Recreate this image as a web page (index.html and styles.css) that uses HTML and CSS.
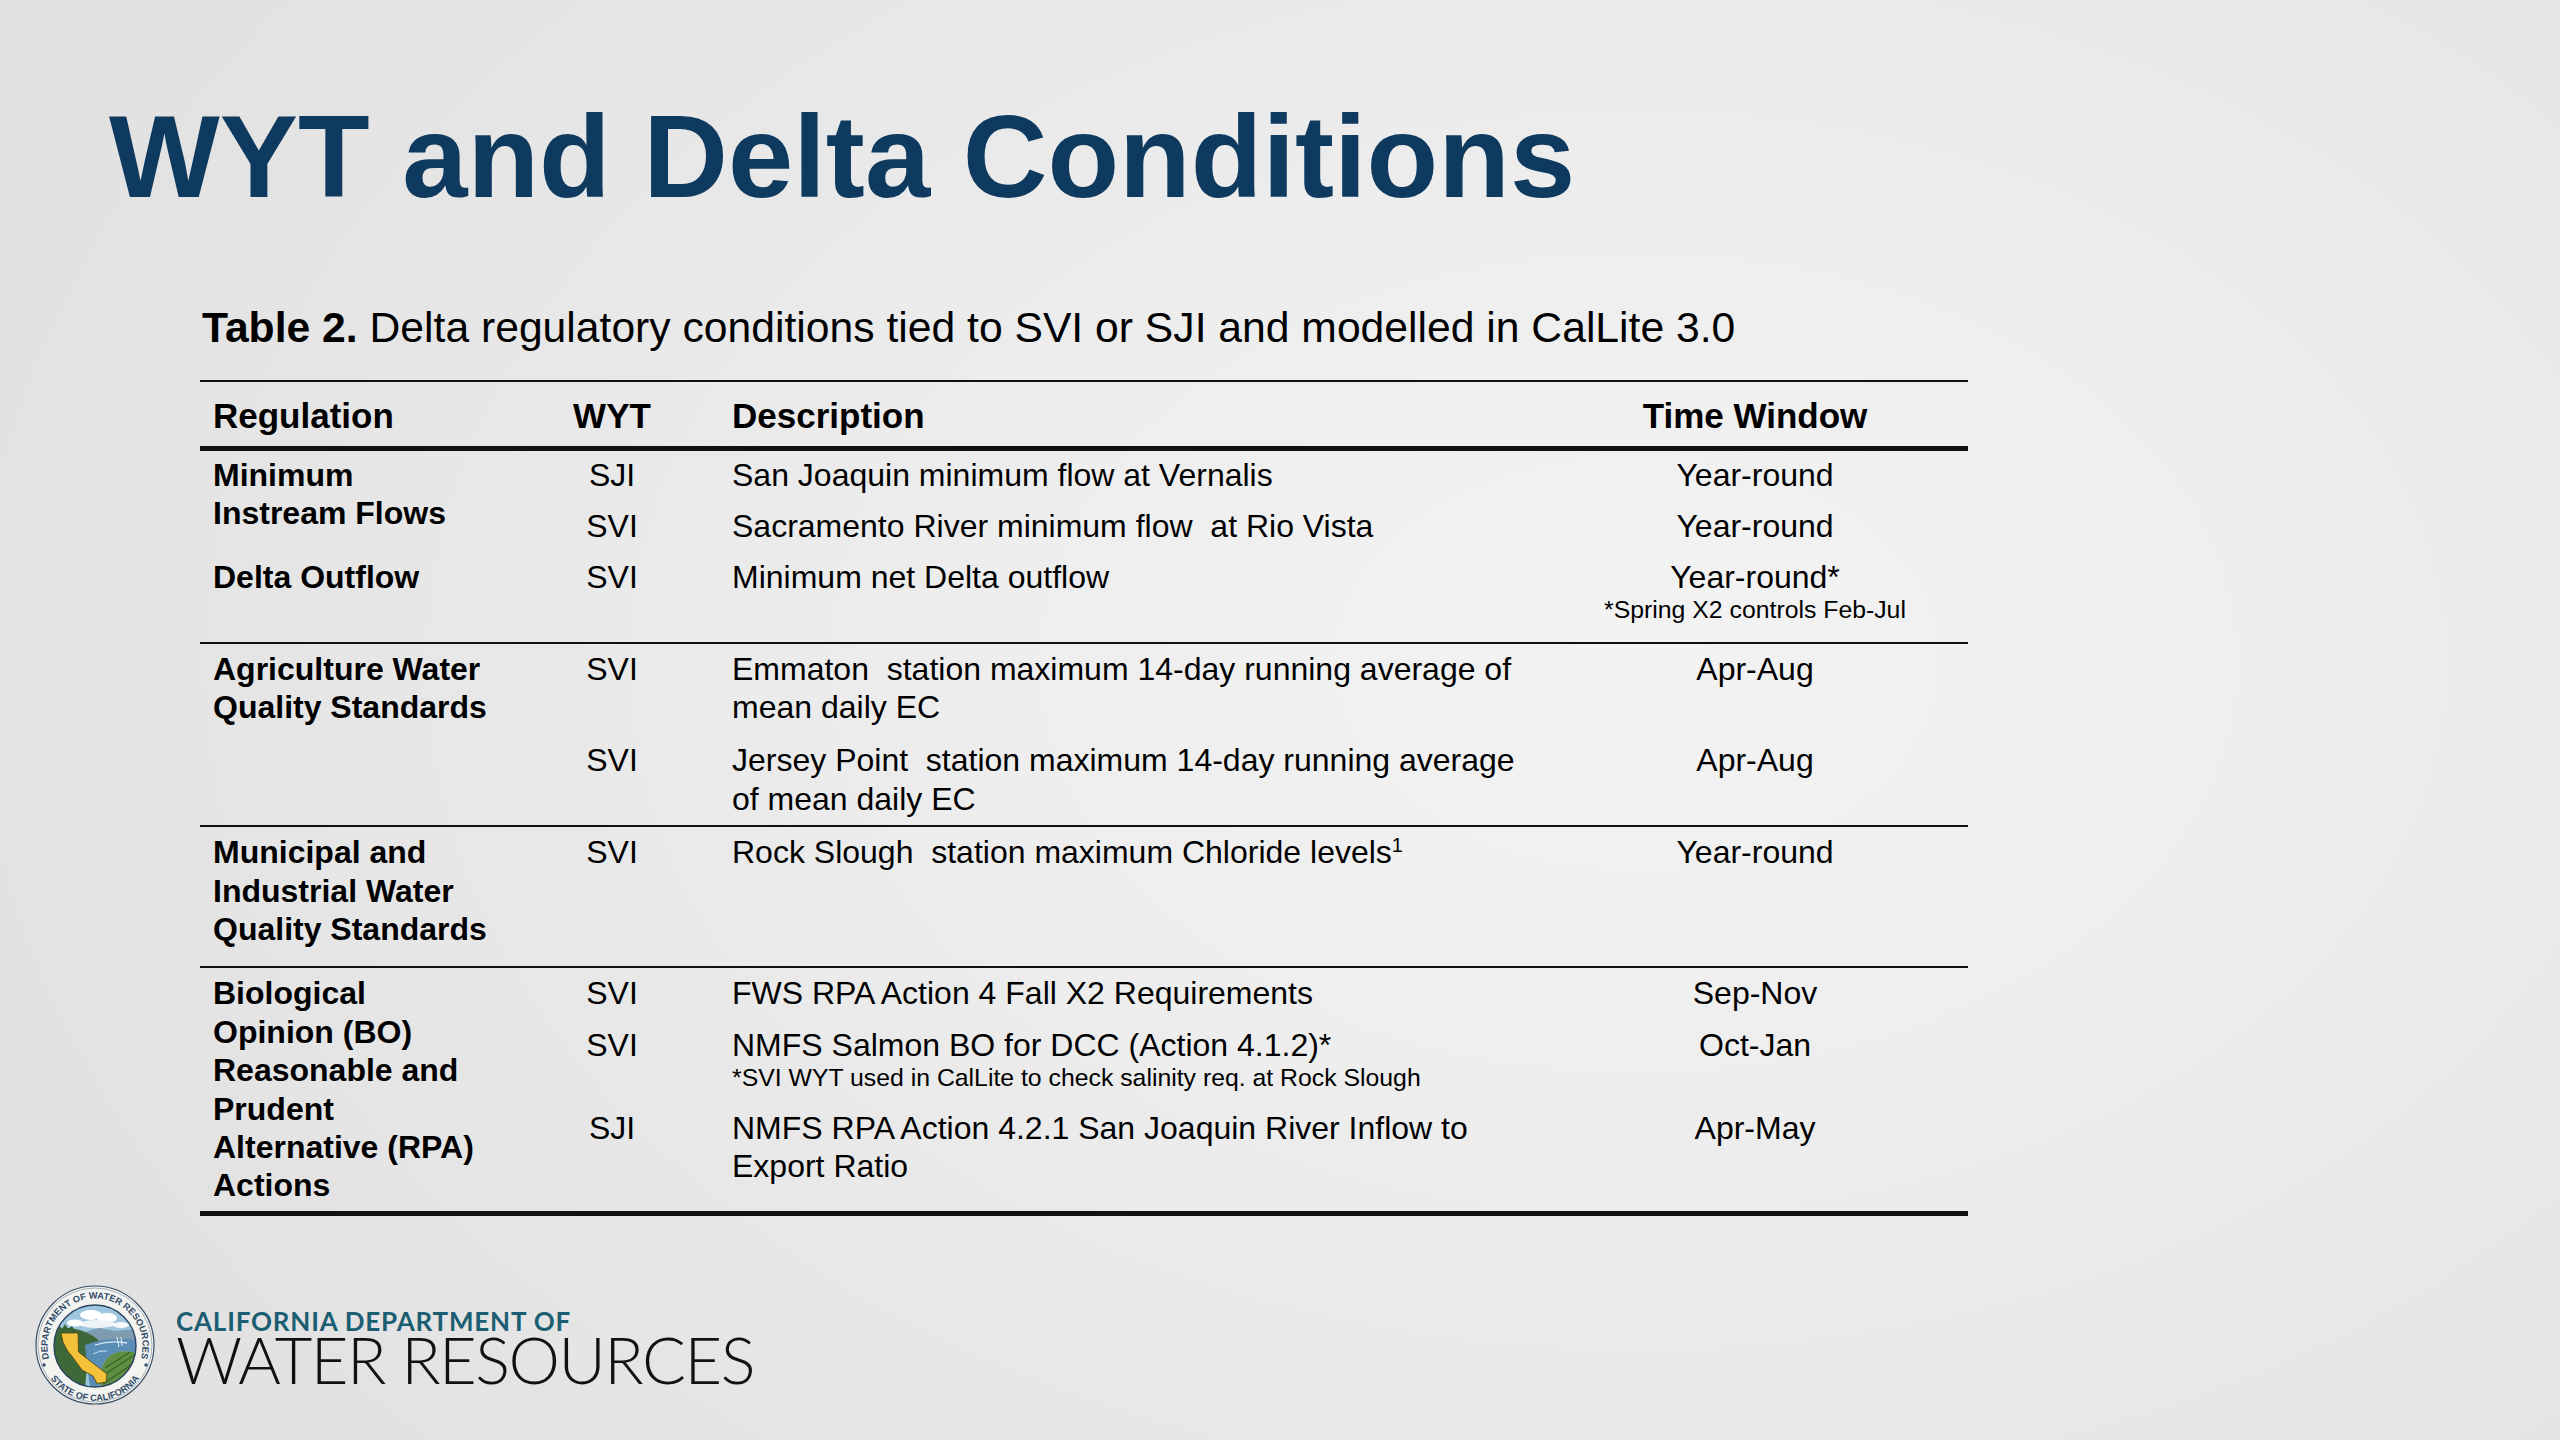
FILE: index.html
```html
<!DOCTYPE html>
<html lang="en">
<head>
<meta charset="utf-8">
<title>WYT and Delta Conditions</title>
<link rel="stylesheet" href="styles.css">
</head>
<body>
<div class="slide">
  <h1 class="title">WYT and Delta Conditions</h1>
  <div class="content">
    <p class="caption"><b>Table 2.</b> Delta regulatory conditions tied to SVI or SJI and modelled in CalLite 3.0</p>
    <div class="table">
      <div class="thead">
        <div class="col-reg">Regulation</div>
        <div class="col-wyt">WYT</div>
        <div class="col-desc">Description</div>
        <div class="col-time">Time Window</div>
      </div>

      <div class="group g1">
        <div class="reg">
          <div class="reg-first">Minimum<br>Instream Flows</div>
          <div>Delta Outflow</div>
        </div>
        <div class="subs">
          <div class="sub"><div class="col-wyt">SJI</div><div class="col-desc">San Joaquin minimum flow at Vernalis</div><div class="col-time">Year-round</div></div>
          <div class="sub"><div class="col-wyt">SVI</div><div class="col-desc">Sacramento River minimum flow&nbsp; at Rio Vista</div><div class="col-time">Year-round</div></div>
          <div class="sub"><div class="col-wyt">SVI</div><div class="col-desc">Minimum net Delta outflow</div><div class="col-time">Year-round*<div class="note">*Spring X2 controls Feb-Jul</div></div></div>
        </div>
      </div>

      <div class="group g2">
        <div class="reg">Agriculture Water<br>Quality Standards</div>
        <div class="subs">
          <div class="sub"><div class="col-wyt">SVI</div><div class="col-desc">Emmaton&nbsp; station maximum 14-day running average of<br>mean daily EC</div><div class="col-time">Apr-Aug</div></div>
          <div class="sub"><div class="col-wyt">SVI</div><div class="col-desc">Jersey Point&nbsp; station maximum 14-day running average<br>of mean daily EC</div><div class="col-time">Apr-Aug</div></div>
        </div>
      </div>

      <div class="group g3">
        <div class="reg">Municipal and<br>Industrial Water<br>Quality Standards</div>
        <div class="subs">
          <div class="sub"><div class="col-wyt">SVI</div><div class="col-desc">Rock Slough&nbsp; station maximum Chloride levels<sup class="sup">1</sup></div><div class="col-time">Year-round</div></div>
        </div>
      </div>

      <div class="group g4">
        <div class="reg">Biological<br>Opinion (BO)<br>Reasonable and<br>Prudent<br>Alternative (RPA)<br>Actions</div>
        <div class="subs">
          <div class="sub"><div class="col-wyt">SVI</div><div class="col-desc">FWS RPA Action 4 Fall X2 Requirements</div><div class="col-time">Sep-Nov</div></div>
          <div class="sub"><div class="col-wyt">SVI</div><div class="col-desc">NMFS Salmon BO for DCC (Action 4.1.2)*<div class="note">*SVI WYT used in CalLite to check salinity req. at Rock Slough</div></div><div class="col-time">Oct-Jan</div></div>
          <div class="sub sub-last"><div class="col-wyt">SJI</div><div class="col-desc">NMFS RPA Action 4.2.1 San Joaquin River Inflow to<br>Export Ratio</div><div class="col-time">Apr-May</div></div>
        </div>
      </div>
    </div>
  </div>

  <div class="footer">
    <svg class="seal" viewBox="0 0 120 120" width="120" height="120" aria-hidden="true">
      <defs>
        <clipPath id="innerClip"><circle cx="60" cy="61" r="41"/></clipPath>
        <path id="topArc" d="M60,108.5 A47.5,47.5 0 1,1 60,13.5 A47.5,47.5 0 1,1 60,108.5"/>
        <path id="botArc" d="M60,6 A55,55 0 1,0 60,116 A55,55 0 1,0 60,6"/>
      </defs>
      <circle cx="60" cy="60" r="59" fill="#f3f3f0" stroke="#3a4f66" stroke-width="1.2"/>
      <circle cx="60" cy="60" r="57" fill="none" stroke="#3a4f66" stroke-width="0.4"/>
      <text class="seal-text"><textPath href="#topArc" startOffset="50%" text-anchor="middle">DEPARTMENT OF WATER RESOURCES</textPath></text>
      <text class="seal-text"><textPath href="#botArc" startOffset="50%" text-anchor="middle">STATE OF CALIFORNIA</textPath></text>
      <circle cx="9" cy="80" r="1.7" fill="#2f4b69"/>
      <circle cx="111" cy="80" r="1.7" fill="#2f4b69"/>
      <g clip-path="url(#innerClip)">
        <rect x="18" y="19" width="84" height="84" fill="#9fc6df"/>
        <ellipse cx="56" cy="30" rx="11" ry="5" fill="#ffffff"/>
        <ellipse cx="72" cy="33" rx="10" ry="5" fill="#ffffff"/>
        <ellipse cx="62" cy="39" rx="18" ry="4" fill="#eef4f8"/>
        <ellipse cx="40" cy="38" rx="8" ry="3.5" fill="#ffffff"/>
        <ellipse cx="86" cy="40" rx="8" ry="3" fill="#f4f8fa"/>
        <path d="M18,50 L34,45 L50,47 L64,43 L80,46 L102,44 L102,60 L18,60 Z" fill="#7e9bb0"/>
        <path d="M18,46 Q34,40 50,47 Q60,51 64,56 Q58,60 54,62 L50,103 L18,103 Z" fill="#3d6838"/>
        <path d="M22,44 L24,40 L27,44 L30,39 L33,44 L37,41 L40,46 Z" fill="#35602f"/>
        <path d="M50,60 Q74,51 102,55 L102,68 Q84,63 73,72 Q63,82 66,103 L55,103 Q52,80 50,60 Z" fill="#5a8db6"/>
        <path d="M60,60 Q76,55 92,58" stroke="#dbe9f2" stroke-width="1.3" fill="none"/>
        <path d="M58,69 Q64,65 72,66" stroke="#cfe2ee" stroke-width="1" fill="none"/>
        <path d="M82,52 L84,62 M86,52 L87,61" stroke="#e6f0f6" stroke-width="1"/>
        <path d="M73,72 Q84,63 102,68 L102,103 L66,103 Q63,83 73,72 Z" fill="#5f8d41"/>
        <g stroke="#38652a" stroke-width="1.4">
          <line x1="68" y1="99" x2="102" y2="76"/>
          <line x1="67" y1="91" x2="101" y2="69"/>
          <line x1="70" y1="83" x2="95" y2="67"/>
          <line x1="74" y1="105" x2="102" y2="84"/>
          <line x1="82" y1="105" x2="102" y2="91"/>
        </g>
        <path d="M26,48 L43,48 L43.5,67 L72,89 L71,97 L62,98.5 L58,91 L47,85 L39,74 L32,65 L28,57 Z" fill="#f4c23a" stroke="#4f3d12" stroke-width="0.8"/>
      </g>
      <circle cx="60" cy="61" r="41" fill="none" stroke="#2c4460" stroke-width="1.4"/>
    </svg>
    <div class="brand">
      <div class="brand-top">CALIFORNIA DEPARTMENT OF</div>
      <div class="brand-main">WATER RESOURCES</div>
    </div>
  </div>
</div>
</body>
</html>
```
FILE: styles.css
```css
* { box-sizing: border-box; }

html, body {
  margin: 0;
  padding: 0;
}

body {
  width: 2560px;
  height: 1440px;
  overflow: hidden;
  font-family: "Liberation Sans", Arial, sans-serif;
  color: #000;
}

.slide {
  width: 2560px;
  height: 1440px;
  padding-top: 87px;
  background: radial-gradient(ellipse 70% 85% at 64% 46%, #f3f3f3 0%, #eeeeee 35%, #e7e7e7 68%, #e1e1e1 100%);
}

.title {
  margin: 0;
  padding-left: 109px;
  font-size: 117.3px;
  line-height: 140.8px;
  font-weight: 700;
  color: #0f3a60;
  white-space: nowrap;
}

.content {
  margin-left: 200px;
  width: 1768px;
}

.caption {
  margin: 74px 0 0 2px;
  font-size: 42.67px;
  line-height: 51.2px;
  white-space: nowrap;
}

.table {
  margin-top: 27px;
}

.thead {
  display: grid;
  grid-template-columns: 310px 204px 828px 426px;
  border-top: 2px solid #111;
  border-bottom: 5px solid #111;
  padding: 13px 0 9px;
  font-weight: 700;
  font-size: 35px;
  line-height: 42px;
}

.col-reg { padding-left: 13px; }
.col-wyt { text-align: center; }
.col-desc { padding-left: 18px; white-space: nowrap; }
.col-time { text-align: center; white-space: nowrap; }

.group {
  display: flex;
  border-bottom: 2px solid #111;
  font-size: 32px;
  line-height: 38.4px;
}

.reg {
  width: 310px;
  flex: none;
  padding-left: 13px;
  font-weight: 700;
  white-space: nowrap;
}

.reg-first { margin-bottom: 25px; }

.subs {
  display: flex;
  flex-direction: column;
  gap: 12.5px;
  width: 1458px;
}

.g2 .subs { gap: 15px; }
.g4 .subs { gap: 13px; }
.g4 .sub-last { margin-top: 3px; }

.sub {
  display: grid;
  grid-template-columns: 204px 828px 426px;
}

.note {
  font-size: 24.8px;
  line-height: 28.8px;
}

.sup {
  font-size: 20px;
  line-height: 0;
  vertical-align: 11px;
}

.g1 { padding: 5px 0 16.5px; }
.g2 { padding: 6px 0 7px; }
.g3 { padding: 6px 0 17.5px; }
.g4 { padding: 6.5px 0 6.5px; border-bottom-width: 5px; }

.footer {
  display: flex;
  align-items: flex-start;
  margin-top: 69px;
  padding-left: 35px;
}

.seal { flex: none; display: block; }

.seal-text {
  font-family: "Liberation Sans", Arial, sans-serif;
  font-weight: 700;
  font-size: 9.2px;
  fill: #2f4b69;
}

.brand {
  margin-left: 21px;
  margin-top: 23px;
  display: flex;
  flex-direction: column;
}

.brand-top {
  font-family: Lato, "Open Sans", sans-serif;
  font-weight: 700;
  font-size: 26px;
  line-height: 26px;
  letter-spacing: 0.8px;
  color: #1b5e72;
  white-space: nowrap;
}

.brand-main {
  font-family: Lato, "Open Sans", sans-serif;
  font-weight: 300;
  font-size: 65px;
  line-height: 50px;
  letter-spacing: -1.5px;
  color: #111;
  white-space: nowrap;
}
```
